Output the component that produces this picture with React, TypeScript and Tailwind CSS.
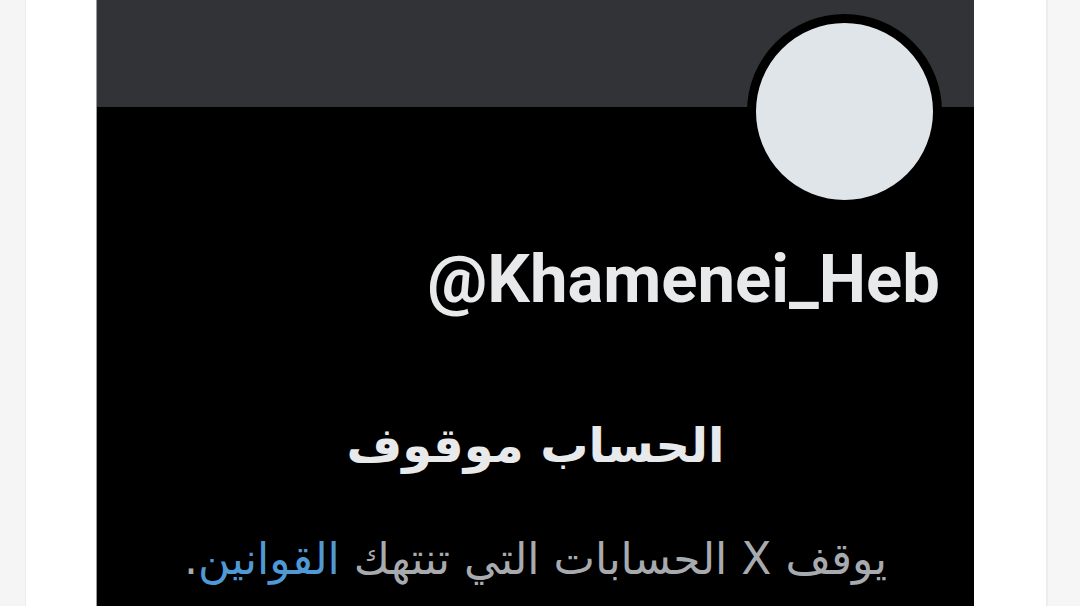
import React from "react";

export default function App() {
  return (
    <div className="flex h-[606px] w-[1080px] overflow-hidden bg-[#f6f6f6]">
      <div className="w-[25px] shrink-0 bg-[#f5f5f5]" />
      <div className="w-px shrink-0 bg-[#ececec]" />
      <div className="w-[70px] shrink-0 bg-white" />
      <div className="w-px shrink-0 bg-[#9a9a9a]" />
      <div className="relative flex w-[877px] shrink-0 flex-col bg-black">
        <div className="h-[107px] shrink-0 bg-[#323337]" />
        <div className="absolute left-[650px] top-[14px] h-[195px] w-[195px] rounded-full border-[9px] border-black bg-[#e0e5e9]" />
        <div className="flex flex-col pt-[139px]">
          <div
            className="pr-[34px] text-right text-[67px] font-bold leading-[1] text-[#e7e9ea]"
            style={{ fontFamily: "Roboto, 'Liberation Sans', sans-serif" }}
          >
            @Khamenei_Heb
          </div>
          <div
            dir="rtl"
            className="mt-[108px] text-center text-[48px] font-bold leading-[1] text-[#e7e9ea]"
            style={{ fontFamily: "'DejaVu Sans', sans-serif" }}
          >
            الحساب موقوف
          </div>
          <div
            dir="rtl"
            className="mt-[68px] text-center text-[44px] leading-[1] text-[#a7abaf]"
            style={{ fontFamily: "'DejaVu Sans', sans-serif" }}
          >
            يوقف X الحسابات التي تنتهك <span className="text-[#4f9ad6]">القوانين</span>.
          </div>
        </div>
      </div>
      <div className="w-[72px] shrink-0 bg-white" />
      <div className="w-[2px] shrink-0 bg-[#ededed]" />
      <div className="flex-1 bg-[#f6f6f6]" />
    </div>
  );
}
